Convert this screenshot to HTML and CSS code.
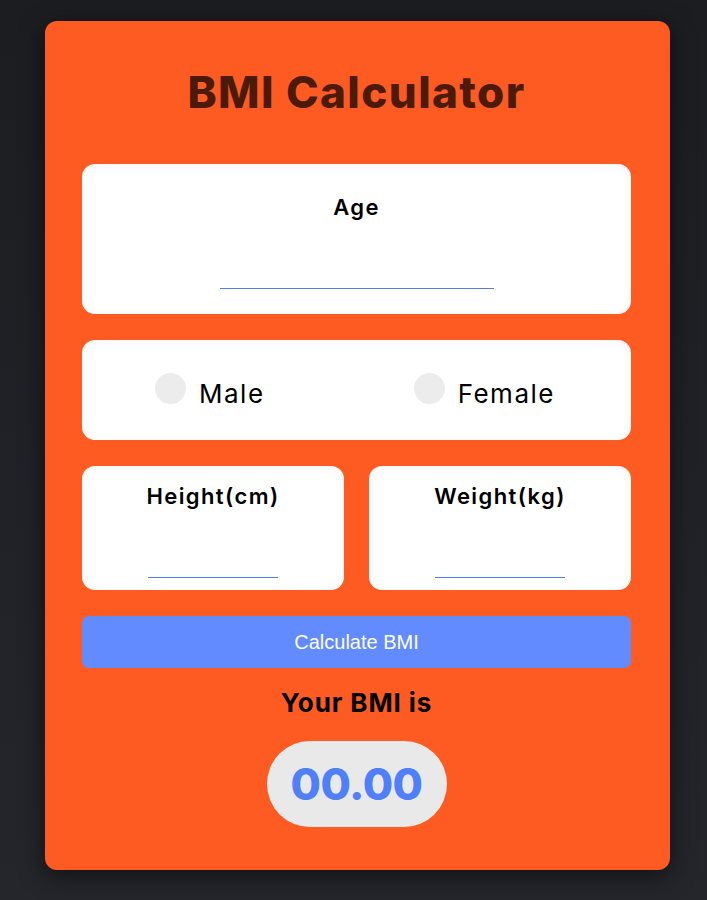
FILE: index.html
```html
<!DOCTYPE html>
<html lang="en">
<head>
<meta charset="utf-8">
<title>BMI Calculator</title>
<link rel="stylesheet" href="styles.css">
</head>
<body>
<main class="calc">
  <h1 class="title">BMI Calculator</h1>
  <section class="box box-age">
    <label class="label" for="age">Age</label>
    <input class="field field-wide" id="age" type="text">
  </section>
  <section class="box box-gender">
    <label class="gender"><span class="radio"></span><span class="gender-text">Male</span></label>
    <label class="gender"><span class="radio"></span><span class="gender-text">Female</span></label>
  </section>
  <div class="row">
    <section class="box box-small">
      <label class="label" for="height">Height(cm)</label>
      <input class="field field-narrow" id="height" type="text">
    </section>
    <section class="box box-small">
      <label class="label" for="weight">Weight(kg)</label>
      <input class="field field-narrow" id="weight" type="text">
    </section>
  </div>
  <button class="btn" type="button">Calculate BMI</button>
  <h2 class="result-title">Your BMI is</h2>
  <div class="pill">00.00</div>
</main>
</body>
</html>
```

FILE: styles.css
```css
html, body {
  margin: 0;
  padding: 0;
}
body {
  background: linear-gradient(#1c1d21, #24262b);
  min-height: 900px;
  font-family: Inter, "Noto Sans", sans-serif;
  padding-top: 21px;
  box-sizing: border-box;
}
.calc {
  width: 625px;
  height: 849px;
  box-sizing: border-box;
  margin: 0 0 0 45px;
  padding: 38px 39px 0 37px;
  background: #fd5b22;
  border-radius: 12px;
  box-shadow: 0 6px 24px rgba(0, 0, 0, 0.55);
  display: flex;
  flex-direction: column;
}
.title {
  margin: 0 0 38px;
  height: 67px;
  line-height: 67px;
  text-align: center;
  font-size: 44px;
  font-weight: 800;
  color: #4b1a08;
  letter-spacing: 1.4px;
}
.box {
  background: #fff;
  border-radius: 13px;
  box-shadow: 0 2px 12px rgba(0, 0, 0, 0.04) inset;
}
.box-age {
  height: 150px;
  box-sizing: border-box;
  padding: 28px 0 24px;
  display: flex;
  flex-direction: column;
  align-items: center;
  margin-bottom: 26px;
}
.label {
  height: 30px;
  line-height: 30px;
  font-size: 22px;
  font-weight: 600;
  color: #000;
  letter-spacing: 1.4px;
}
.field {
  border: none;
  border-bottom: 1px solid #4f7df8;
  outline: none;
  background: transparent;
  padding: 0;
  height: 30px;
  box-sizing: border-box;
}
.field-wide {
  width: 274px;
  margin-top: 37px;
}
.box-gender {
  height: 100px;
  display: flex;
  justify-content: space-around;
  align-items: center;
  margin-bottom: 26px;
}
.gender {
  display: flex;
  align-items: center;
  gap: 13px;
  margin-right: 3px;
  margin-top: 8px;
}
.radio {
  width: 31px;
  height: 31px;
  border-radius: 50%;
  background: #ececec;
  margin-top: -12px;
}
.gender-text {
  font-size: 26px;
  font-weight: 400;
  color: #000;
  line-height: 32px;
  letter-spacing: 1.5px;
}
.row {
  display: flex;
  gap: 25px;
  margin-bottom: 26px;
}
.box-small {
  flex: 1;
  height: 124px;
  box-sizing: border-box;
  padding: 15px 0 12px;
  display: flex;
  flex-direction: column;
  align-items: center;
}
.field-narrow {
  width: 130px;
  margin-top: 37px;
}
.btn {
  height: 52px;
  border: none;
  border-radius: 7px;
  background: #618bff;
  color: #fff;
  font-family: "Liberation Sans", Arial, sans-serif;
  font-size: 20px;
  padding: 0;
}
.result-title {
  margin: 17px 0 0;
  text-align: center;
  font-size: 26px;
  font-weight: 700;
  line-height: 36px;
  color: #000;
  letter-spacing: 0.9px;
}
.pill {
  align-self: center;
  margin-top: 20px;
  width: 180px;
  height: 86px;
  border-radius: 43px;
  background: #e9e9e9;
  color: #5080f7;
  font-size: 44px;
  font-weight: 800;
  letter-spacing: -0.5px;
  display: flex;
  align-items: center;
  justify-content: center;
}
```
